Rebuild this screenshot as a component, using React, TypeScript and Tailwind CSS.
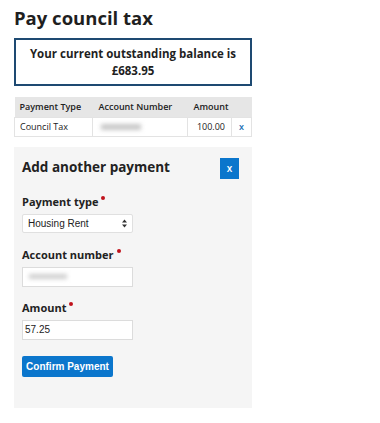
function Required() {
    return <span className="inline-block w-[4px] h-[4px] rounded-full bg-[#c0121c] ml-[3px] relative -top-[6px]" />;
}

export default function App() {
    return (
        <div className="w-[380px] h-[423px] bg-white font-['Open_Sans',sans-serif] text-[#222]">
            <div className="pl-[14px] pt-[6px] w-[252px]">
                <h1 className="text-[18.5px] font-bold leading-[24px] text-[#1f1f1f]">Pay council tax</h1>

                <div className="mt-[8px] w-[238px] border-2 border-[#1e4a72] py-[5px] text-center text-[11.5px] font-bold leading-[17px] text-[#1f1f1f]">
                    Your current outstanding balance is
                    <br />
                    £683.95
                </div>

                <table className="mt-[11px] w-[238px] border-collapse text-[9px]">
                    <thead>
                        <tr className="bg-[#e6e6e6] h-[20px]">
                            <th className="text-left font-semibold pl-[5px]">Payment Type</th>
                            <th className="text-left font-semibold pl-[6px]">Account Number</th>
                            <th className="text-left font-semibold pl-[6px]">Amount</th>
                            <th></th>
                        </tr>
                    </thead>
                    <tbody>
                        <tr className="h-[19px] border border-[#e3e3e3]">
                            <td className="pl-[5px] w-[78px] border-r border-[#e3e3e3]">Council Tax</td>
                            <td className="pl-[8px] w-[95px] border-r border-[#e3e3e3]">
                                <div className="w-[40px] h-[6px] bg-[#c8c8c8] blur-[2px]" />
                            </td>
                            <td className="pr-[6px] text-right border-r border-[#e3e3e3]">100.00</td>
                            <td className="text-center text-[#1b6fb5] font-semibold w-[20px]">x</td>
                        </tr>
                    </tbody>
                </table>

                <div className="mt-[10px] w-[238px] h-[261px] bg-[#f5f5f5] px-[8px] pt-[11px]">
                    <div className="flex items-start justify-between pr-[5px]">
                        <h2 className="text-[13.5px] font-bold leading-[18px]">Add another payment</h2>
                        <button className="w-[19px] h-[21px] bg-[#0b76cc] text-white text-[10px] font-semibold flex items-center justify-center">x</button>
                    </div>

                    <div className="mt-[15px] text-[11px] font-bold leading-[15px]">
                        Payment type<Required />
                    </div>
                    <div className="mt-[5px] w-[111px] h-[19px] bg-white border border-[#e0e0e0] rounded-[2px] flex items-center justify-between px-[5px] text-[10px] font-['Liberation_Sans',sans-serif]">
                        <span>Housing Rent</span>
                        <svg width="5" height="9" viewBox="0 0 5 9">
                            <path d="M0 3.5 L2.5 0.5 L5 3.5Z M0 5.5 L2.5 8.5 L5 5.5Z" fill="#333" />
                        </svg>
                    </div>

                    <div className="mt-[14px] text-[11px] font-bold leading-[15px]">
                        Account number<Required />
                    </div>
                    <div className="mt-[5px] w-[111px] h-[20px] bg-white border border-[#dcdcdc] flex items-center px-[6px]">
                        <div className="w-[38px] h-[5px] bg-[#cfcfcf] blur-[2px]" />
                    </div>

                    <div className="mt-[13px] text-[11px] font-bold leading-[15px]">
                        Amount<Required />
                    </div>
                    <div className="mt-[5px] w-[111px] h-[20px] bg-white border border-[#dcdcdc] flex items-center px-[2px] text-[10px] font-['Liberation_Sans',sans-serif]">
                        57.25
                    </div>

                    <button className="mt-[16px] w-[91px] h-[21px] bg-[#0b76cc] text-white text-[10px] font-bold rounded-[2px] font-['Liberation_Sans',sans-serif]">
                        Confirm Payment
                    </button>
                </div>
            </div>
        </div>
    );
}
